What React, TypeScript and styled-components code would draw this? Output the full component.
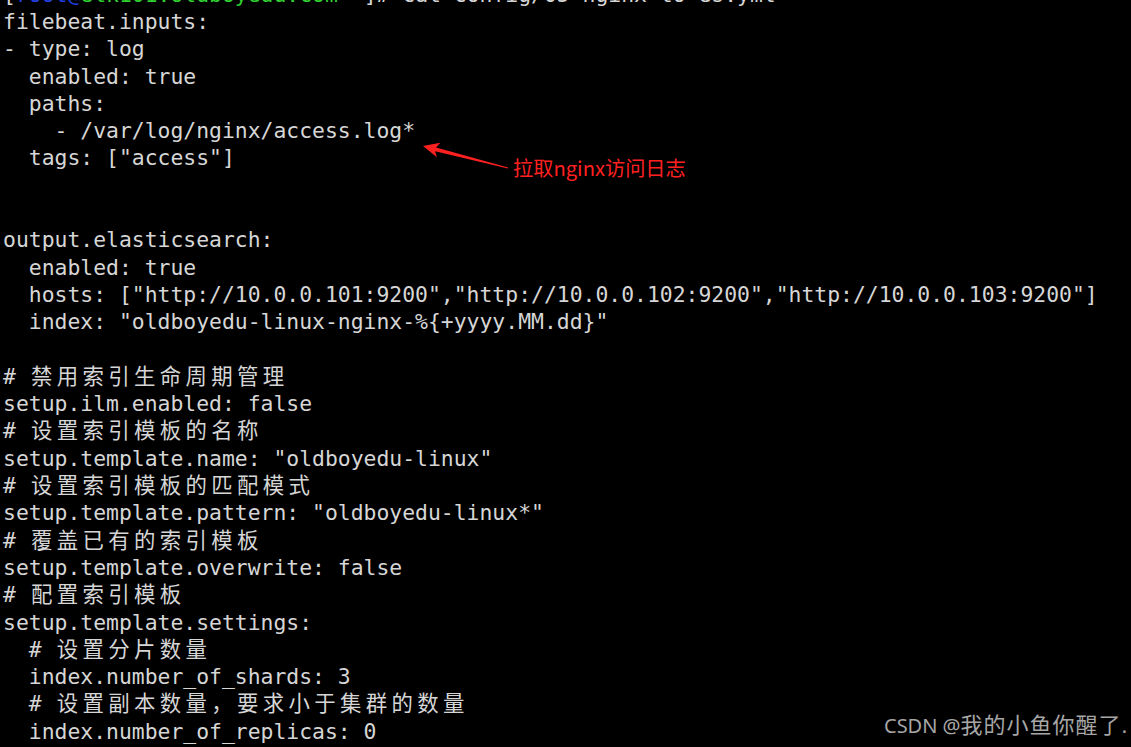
import React from "react";
import styled, { createGlobalStyle } from "styled-components";

const FS = 21.4;
const LH = 27.3;
const CH = FS * 0.60205;
const WIDE_EXTRA = CH * 2 - FS;

const GlobalStyle = createGlobalStyle`
  html, body {
    margin: 0;
    padding: 0;
    background: #000;
  }
  body {
    width: 1131px;
    height: 747px;
    overflow: hidden;
  }
`;

const Screen = styled.div`
  position: relative;
  width: 1131px;
  height: 747px;
  overflow: hidden;
  background: #000;
`;

const Terminal = styled.div`
  margin-top: -19.3px;
  padding-left: 3px;
  font-family: "DejaVu Sans Mono", "Liberation Mono", monospace;
  font-size: ${FS}px;
  line-height: ${LH}px;
  color: #d6d6d6;
`;

const Line = styled.div`
  height: ${LH}px;
  white-space: pre;
`;

type Tone = "text" | "user" | "host";
const toneColor: Record<Tone, string> = {
  text: "#d6d6d6",
  user: "#2340e6",
  host: "#2fd02f",
};

const Seg = styled.span<{ $tone: Tone }>`
  color: ${(p) => toneColor[p.$tone]};
`;

const Wide = styled.span`
  font-family: "Noto Sans CJK SC", "Noto Sans CJK JP", sans-serif;
  line-height: 1;
  letter-spacing: ${WIDE_EXTRA}px;
  padding-left: ${WIDE_EXTRA / 2}px;
  margin-right: -${WIDE_EXTRA / 2}px;
`;

const ArrowSvg = styled.svg`
  position: absolute;
  left: 420px;
  top: 136px;
  width: 95px;
  height: 36px;
  overflow: visible;
`;

const Label = styled.div`
  position: absolute;
  left: 513px;
  top: 156px;
  font-family: "Noto Sans CJK SC", sans-serif;
  font-size: 20.2px;
  line-height: 24px;
  color: #ff2020;
  white-space: nowrap;
`;

const Watermark = styled.div`
  position: absolute;
  right: 4px;
  bottom: 9px;
  font-family: "Noto Sans", "Noto Sans CJK SC", sans-serif;
  font-size: 20px;
  line-height: 24px;
  color: #a6a6a6;
  white-space: nowrap;
`;

const WatermarkCjk = styled.span`
  font-family: "Noto Sans CJK SC", sans-serif;
  font-size: 22px;
  letter-spacing: 1px;
`;

const CJK_RE = /([\u3000-\u303f\u4e00-\u9fff\uff00-\uffef]+)/;

function renderText(text: string) {
  return text.split(CJK_RE).map((part, i) =>
    i % 2 === 1 ? <Wide key={i}>{part}</Wide> : <React.Fragment key={i}>{part}</React.Fragment>
  );
}

const lines: string[] = [
  "filebeat.inputs:",
  "- type: log",
  "  enabled: true",
  "  paths:",
  "    - /var/log/nginx/access.log*",
  '  tags: ["access"]',
  "",
  "",
  "output.elasticsearch:",
  "  enabled: true",
  '  hosts: ["http://10.0.0.101:9200","http://10.0.0.102:9200","http://10.0.0.103:9200"]',
  '  index: "oldboyedu-linux-nginx-%{+yyyy.MM.dd}"',
  "",
  "# 禁用索引生命周期管理",
  "setup.ilm.enabled: false",
  "# 设置索引模板的名称",
  'setup.template.name: "oldboyedu-linux"',
  "# 设置索引模板的匹配模式",
  'setup.template.pattern: "oldboyedu-linux*"',
  "# 覆盖已有的索引模板",
  "setup.template.overwrite: false",
  "# 配置索引模板",
  "setup.template.settings:",
  "  # 设置分片数量",
  "  index.number_of_shards: 3",
  "  # 设置副本数量，要求小于集群的数量",
  "  index.number_of_replicas: 0",
];

export default function App() {
  return (
    <>
      <GlobalStyle />
      <Screen>
        <Terminal>
          <Line>
            <Seg $tone="text">[</Seg>
            <Seg $tone="user">root@</Seg>
            <Seg $tone="host">elk101.oldboyedu.com</Seg>
            <Seg $tone="text"> ~]# cat config/05-nginx-to-es.yml</Seg>
          </Line>
          {lines.map((l, i) => (
            <Line key={i}>{renderText(l)}</Line>
          ))}
        </Terminal>
        <ArrowSvg viewBox="0 0 95 36">
          <polygon
            points="3,10 20.3,6.8 16.1,11.4 88.1,31.4 87.9,32.6 15.1,15.2 16.9,21.2"
            fill="#ff2020"
          />
        </ArrowSvg>
        <Label>拉取nginx访问日志</Label>
        <Watermark>
          CSDN @<WatermarkCjk>我的小鱼你醒了</WatermarkCjk>.
        </Watermark>
      </Screen>
    </>
  );
}
